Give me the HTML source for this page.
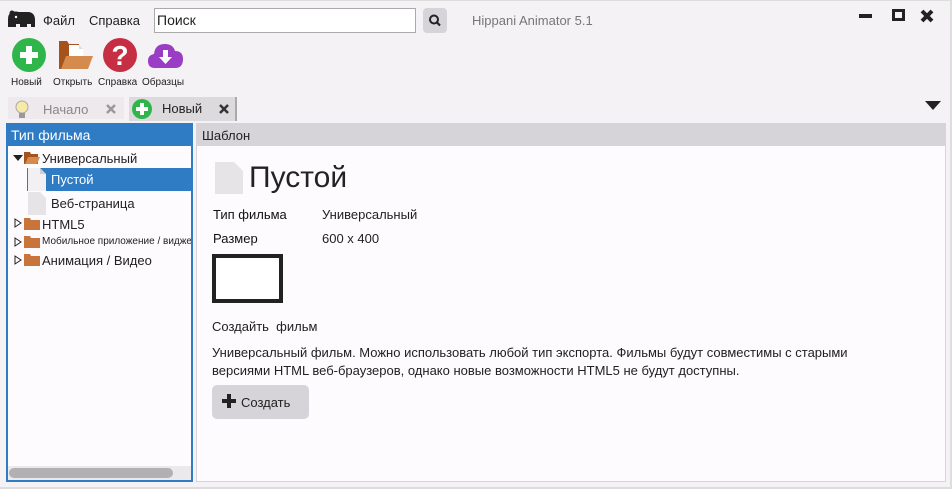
<!DOCTYPE html>
<html><head><meta charset="utf-8"><style>
*{margin:0;padding:0;box-sizing:border-box}
body{width:952px;height:489px;background:#f5f2f5;font-family:"Liberation Sans","Noto Sans CJK SC",sans-serif;position:relative;overflow:hidden;color:#222}
.a{position:absolute}
.t{font-size:13px}
</style></head><body>
<div class="a" style="left:0;top:0;width:952px;height:1px;background:#ddd"></div>
<div class="a" style="right:0;top:0;width:2px;height:489px;background:#ddd"></div>
<div class="a" style="left:0;bottom:0;width:952px;height:2px;background:#ddd"></div>
<!-- logo -->
<svg class="a" style="left:7px;top:10px" width="28" height="18" viewBox="0 0 28 18"><path d="M1 17V9Q1 3 6 2Q8 1 12 2H22Q28 3 28 10V17H24V14H20V17H13V14H9V17Z" fill="#222"/><circle cx="5" cy="3" r="2.5" fill="#222"/><circle cx="9" cy="7" r="1.2" fill="#fff"/></svg>
<div class="a t" style="left:43px;top:13px">Файл</div>
<div class="a t" style="left:89px;top:13px">Справка</div>
<div class="a" style="left:154px;top:8px;width:262px;height:25px;border:1px solid #aaa;background:#fff;font-size:14px;padding:3px 2px">Поиск</div>
<div class="a" style="left:423px;top:8px;width:24px;height:25px;background:#d6d4d8;border-radius:4px"><svg width="24" height="25"><circle cx="11" cy="11.5" r="4" stroke="#222" stroke-width="2" fill="none"/><path d="M14 14.5L17 17.5" stroke="#222" stroke-width="2.2"/></svg></div>
<div class="a t" style="left:472px;top:13px;color:#777">Hippani Animator 5.1</div>
<div class="a" style="left:859px;top:14px;width:13px;height:4px;background:#222"></div>
<div class="a" style="left:892px;top:9px;width:13px;height:12px;border:3px solid #222"></div>
<svg class="a" style="left:920px;top:9px" width="14" height="14"><path d="M2 2L12 12M12 2L2 12" stroke="#222" stroke-width="4"/></svg>
<!-- toolbar -->
<svg class="a" style="left:12px;top:38px" width="36" height="36"><circle cx="17" cy="17" r="17" fill="#2fb64b"/><path d="M17 8V26M8 17H26" stroke="#fff" stroke-width="6"/></svg>
<svg class="a" style="left:57px;top:39px" width="38" height="32"><path d="M2 2H10L12 5H22V30H2Z" fill="#a5521c"/><path d="M12 6H22L26 10V24H12Z" fill="#fff"/><path d="M22 6V10H26" fill="#ddd"/><path d="M4 30L9 17H36L31 30Z" fill="#d58b4e"/></svg>
<svg class="a" style="left:103px;top:38px" width="36" height="36"><circle cx="17" cy="17" r="17" fill="#c62f43"/><text x="17" y="27" font-size="28" font-weight="bold" fill="#fff" text-anchor="middle" font-family="Liberation Sans">?</text></svg>
<svg class="a" style="left:147px;top:40px" width="38" height="30"><path d="M8 28Q1 28 1 21Q1 15 7 14Q8 4 18 4Q26 4 28 11Q36 11 36 19Q36 28 28 28Z" fill="#9a3cc4"/><path d="M16 10H21V17H25L18.5 24L12 17H16Z" fill="#fff"/></svg>
<div class="a" style="left:11px;top:77px;font-size:10px">Новый</div>
<div class="a" style="left:53px;top:77px;font-size:10px">Открыть</div>
<div class="a" style="left:98px;top:77px;font-size:10px">Справка</div>
<div class="a" style="left:142px;top:77px;font-size:10px">Образцы</div>
<!-- tabs -->
<div class="a" style="left:8px;top:97px;width:116px;height:22px;background:#ede9ed"></div>
<svg class="a" style="left:15px;top:100px" width="14" height="20"><circle cx="7" cy="7" r="6" fill="#f7e9a8" stroke="#aaa"/><rect x="4" y="13" width="6" height="5" fill="#999"/></svg>
<div class="a t" style="left:43px;top:102px;color:#888">Начало</div>
<svg class="a" style="left:106px;top:104px" width="10" height="10"><path d="M1 1L9 9M9 1L1 9" stroke="#999" stroke-width="2.5"/></svg>
<div class="a" style="left:129px;top:97px;width:108px;height:24px;background:#dcdadd;border-right:2px solid #aaa"></div>
<svg class="a" style="left:131px;top:98px" width="22" height="22"><circle cx="11" cy="11" r="10" fill="#2fb64b"/><path d="M11 5V17M5 11H17" stroke="#fff" stroke-width="4"/></svg>
<div class="a t" style="left:162px;top:101px">Новый</div>
<svg class="a" style="left:219px;top:104px" width="10" height="10"><path d="M1 1L9 9M9 1L1 9" stroke="#333" stroke-width="2.5"/></svg>
<svg class="a" style="left:925px;top:101px" width="16" height="10"><path d="M0 0H16L8 9Z" fill="#222"/></svg>
<!-- left panel -->
<div class="a" style="left:6px;top:123px;width:187px;height:359px;border:2px solid #2f7bc4;background:#fdfbfd"></div>
<div class="a" style="left:6px;top:123px;width:187px;height:23px;background:#2f7bc4;color:#fff;font-size:14px;padding:4px 5px">Тип фильма</div>
<svg class="a" style="left:13px;top:155px" width="10" height="6"><path d="M0 0H10L5 6Z" fill="#222"/></svg>
<svg class="a" style="left:24px;top:152px" width="16" height="12"><path d="M0 0H6L7 2H14V12H0Z" fill="#a5521c"/><path d="M1 12L4 5H16L13 12Z" fill="#d58b4e"/></svg>
<div class="a t" style="left:42px;top:151px">Универсальный</div>
<div class="a" style="left:27px;top:168px;width:164px;height:23px;background:#2f7bc4"></div>
<svg class="a" style="left:28px;top:168px" width="18" height="23"><path d="M0 0H12L18 6V23H0Z" fill="#f2f0f2"/><path d="M12 0V6H18" fill="#d0ced0"/></svg>
<div class="a t" style="left:51px;top:172px;color:#fff">Пустой</div>
<svg class="a" style="left:28px;top:192px" width="18" height="23"><path d="M0 0H12L18 6V23H0Z" fill="#e6e4e6"/></svg>
<div class="a t" style="left:51px;top:196px">Веб-страница</div>
<svg class="a" style="left:14px;top:218px" width="8" height="10"><path d="M1 1L7 5L1 9Z" fill="none" stroke="#222"/></svg>
<svg class="a" style="left:24px;top:218px" width="16" height="12"><path d="M0 0H6L7 2H16V12H0Z" fill="#c8743a"/></svg>
<div class="a t" style="left:42px;top:217px">HTML5</div>
<svg class="a" style="left:14px;top:237px" width="8" height="10"><path d="M1 1L7 5L1 9Z" fill="none" stroke="#222"/></svg>
<svg class="a" style="left:24px;top:236px" width="16" height="12"><path d="M0 0H6L7 2H16V12H0Z" fill="#c8743a"/></svg>
<div class="a" style="left:42px;top:236px;font-size:10px;white-space:nowrap;width:149px;overflow:hidden">Мобильное приложение / виджет</div>
<svg class="a" style="left:14px;top:255px" width="8" height="10"><path d="M1 1L7 5L1 9Z" fill="none" stroke="#222"/></svg>
<svg class="a" style="left:24px;top:254px" width="16" height="12"><path d="M0 0H6L7 2H16V12H0Z" fill="#c8743a"/></svg>
<div class="a t" style="left:42px;top:253px">Анимация / Видео</div>
<div class="a" style="left:8px;top:466px;width:183px;height:14px;background:#ebe9eb"></div>
<div class="a" style="left:9px;top:468px;width:164px;height:10px;border-radius:5px;background:#b2b0b3"></div>
<!-- right panel -->
<div class="a" style="left:196px;top:123px;width:750px;height:359px;border:1px solid #d6d4d8;background:#fdfbfd"></div>
<div class="a" style="left:196px;top:123px;width:750px;height:23px;background:#d6d4d8;font-size:13px;padding:5px 6px">Шаблон</div>
<svg class="a" style="left:215px;top:162px" width="28" height="32"><path d="M0 0H19L28 9V32H0Z" fill="#e6e4e6"/></svg>
<div class="a" style="left:249px;top:161px;font-size:30px">Пустой</div>
<div class="a t" style="left:213px;top:207px;color:#111">Тип фильма</div>
<div class="a t" style="left:322px;top:207px">Универсальный</div>
<div class="a t" style="left:213px;top:231px;color:#111">Размер</div>
<div class="a t" style="left:322px;top:231px">600 x 400</div>
<div class="a" style="left:212px;top:254px;width:71px;height:49px;border:4px solid #222;background:#fff"></div>
<div class="a t" style="left:212px;top:319px">Создайть &nbsp;фильм</div>
<div class="a t" style="left:212px;top:344px;line-height:18px;width:690px">Универсальный фильм. Можно использовать любой тип экспорта. Фильмы будут совместимы с старыми версиями HTML веб-браузеров, однако новые возможности HTML5 не будут доступны.</div>
<div class="a" style="left:212px;top:385px;width:97px;height:34px;background:#d6d4d8;border-radius:5px"></div>
<svg class="a" style="left:222px;top:394px" width="14" height="14"><path d="M7 0V14M0 7H14" stroke="#222" stroke-width="4"/></svg>
<div class="a t" style="left:241px;top:395px">Создать</div>
</body></html>
